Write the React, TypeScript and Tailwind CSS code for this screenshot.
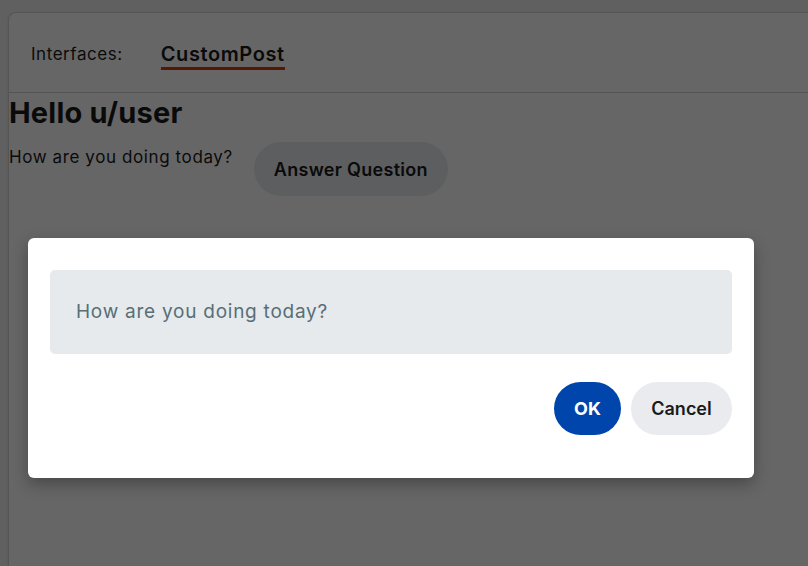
export default function App() {
  return (
    <div className="relative h-[566px] w-[808px] overflow-hidden bg-[#f0f0f0] font-['Inter',sans-serif] text-[#1a1a1b]">
      <div className="ml-[8px] mt-[12px] h-[600px] w-[860px] rounded-tl-[8px] border border-[#d4d4d4] bg-white shadow-sm">
        <div className="flex h-[80px] items-center border-b border-[#cfcfcf] pl-[22px]">
          <span className="mt-[4px] text-[17px] tracking-[0.55px] text-[#1c1c1c]">Interfaces:</span>
          <span className="ml-[38px] mt-[6px] border-b-[3px] border-[#d93a00] pb-[1px] text-[20px] font-semibold leading-[24px] tracking-[0.6px]">
            CustomPost
          </span>
        </div>
        <h1 className="mt-[3px] text-[29px] font-bold leading-[34px] tracking-[0.2px]">Hello u/user</h1>
        <div className="mt-[12px] flex items-start">
          <p className="mt-[4px] text-[17px] leading-[22px] tracking-[0.6px]">How are you doing today?</p>
          <button className="ml-[21px] h-[54px] rounded-full bg-[#e9ebed] px-[20px] text-[18px] font-semibold tracking-[0.3px] text-[#1a1a1b]">
            Answer Question
          </button>
        </div>
      </div>

      <div className="absolute inset-0 bg-black/60 pl-[28px] pt-[238px]">
        <div className="w-[726px] rounded-[6px] bg-white px-[22px] pb-[43px] pt-[32px] shadow-[0_6px_16px_rgba(0,0,0,0.3)]">
          <div className="flex h-[84px] items-center rounded-[5px] bg-[#e6eaed] px-[26px]">
            <span className="text-[19px] tracking-[0.75px] text-[#576f76]">How are you doing today?</span>
          </div>
          <div className="mt-[28px] flex justify-end gap-[10px]">
            <button className="h-[53px] w-[67px] rounded-full bg-[#0045ac] text-[18px] font-bold text-white">OK</button>
            <button className="h-[53px] w-[101px] rounded-full bg-[#e9ebee] text-[18px] font-semibold text-[#1a1a1b]">
              Cancel
            </button>
          </div>
        </div>
      </div>
    </div>
  );
}
